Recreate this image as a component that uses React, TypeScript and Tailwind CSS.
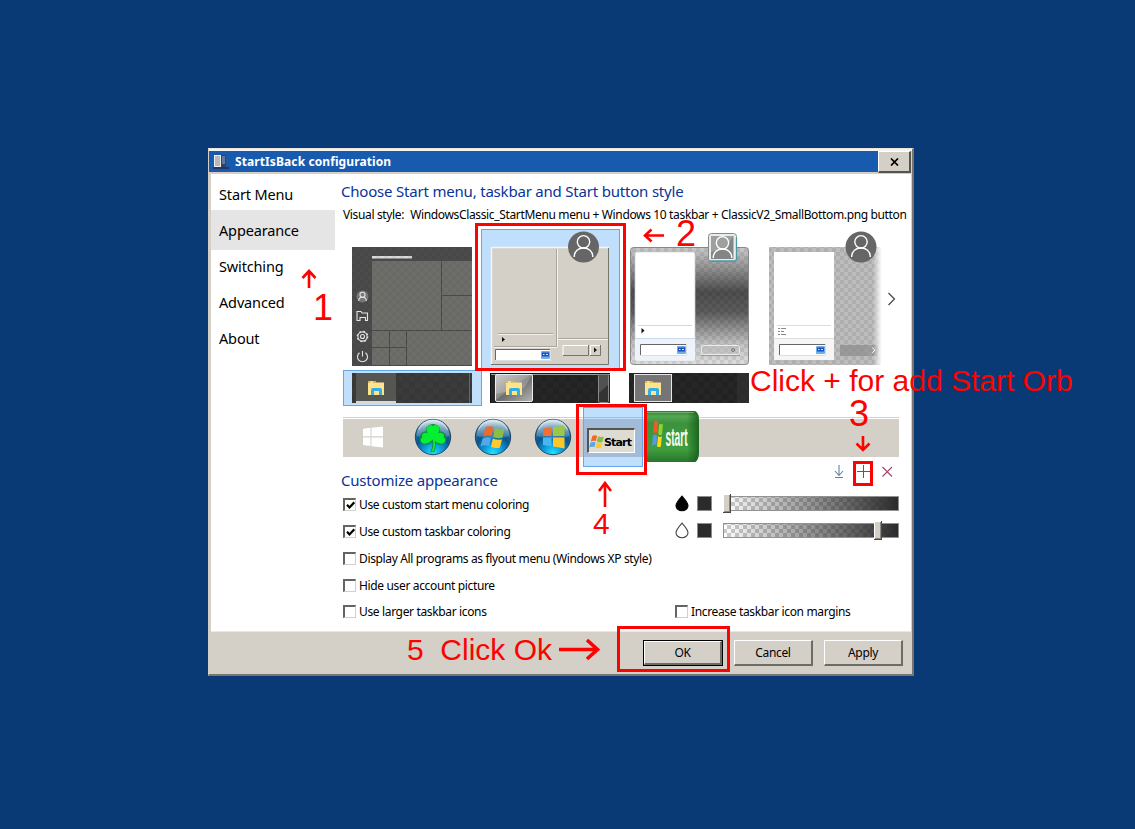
import React from "react";

const red = "#fb0300";

function Defs() {
  return (
    <svg width="0" height="0" className="absolute" aria-hidden="true">
      <defs>
        <pattern id="chk" width="8" height="8" patternUnits="userSpaceOnUse">
          <rect width="4" height="4" fill="#000" opacity=".08" />
          <rect x="4" y="4" width="4" height="4" fill="#000" opacity=".08" />
        </pattern>
        <pattern id="chkLight" width="12" height="12" patternUnits="userSpaceOnUse">
          <rect width="6" height="6" fill="#fff" opacity=".02" />
          <rect x="6" y="6" width="6" height="6" fill="#fff" opacity=".02" />
        </pattern>
        <linearGradient id="aero" x1="0" y1="0" x2="0" y2="1">
          <stop offset="0" stopColor="#c9c9c9" />
          <stop offset=".12" stopColor="#a5a5a5" />
          <stop offset=".38" stopColor="#4e4e4e" />
          <stop offset=".55" stopColor="#5c5c5c" />
          <stop offset=".82" stopColor="#c0c0c0" />
          <stop offset="1" stopColor="#dedede" />
        </linearGradient>
        <linearGradient id="fade" x1="0" y1="0" x2="1" y2="0">
          <stop offset="0" stopColor="#fff" stopOpacity="0" />
          <stop offset=".8" stopColor="#fff" />
        </linearGradient>
        <linearGradient id="gloss" x1="0" y1="0" x2="1" y2="1">
          <stop offset="0" stopColor="#c4c4c4" />
          <stop offset=".45" stopColor="#8a8a8a" />
          <stop offset=".5" stopColor="#6c6c6c" />
          <stop offset="1" stopColor="#b5b5b5" />
        </linearGradient>
        <radialGradient id="orb" cx=".5" cy=".95" r=".95">
          <stop offset="0" stopColor="#25e0ff" />
          <stop offset=".28" stopColor="#0b9bdc" />
          <stop offset=".55" stopColor="#07568f" />
          <stop offset=".8" stopColor="#2c6d9c" />
          <stop offset="1" stopColor="#a9cbdd" />
        </radialGradient>
        <linearGradient id="shine" x1="0" y1="0" x2="0" y2="1">
          <stop offset="0" stopColor="#fff" stopOpacity=".65" />
          <stop offset="1" stopColor="#fff" stopOpacity=".12" />
        </linearGradient>
        <linearGradient id="xp" x1="0" y1="0" x2="0" y2="1">
          <stop offset="0" stopColor="#2f7a2f" />
          <stop offset=".1" stopColor="#55a754" />
          <stop offset=".25" stopColor="#3b923b" />
          <stop offset=".75" stopColor="#3f9f3f" />
          <stop offset="1" stopColor="#2a742b" />
        </linearGradient>
        <linearGradient id="xpEdge" x1="0" y1="0" x2="1" y2="0">
          <stop offset="0" stopColor="#175c1b" stopOpacity="0" />
          <stop offset="1" stopColor="#175c1b" stopOpacity=".85" />
        </linearGradient>
        <linearGradient id="slide" x1="0" y1="0" x2="1" y2="0">
          <stop offset="0" stopColor="#2b2b2b" stopOpacity="0" />
          <stop offset="1" stopColor="#2b2b2b" />
        </linearGradient>
        <pattern id="sliderChk" width="8" height="8" patternUnits="userSpaceOnUse">
          <rect width="8" height="8" fill="#fff" />
          <rect width="4" height="4" fill="#ccc" />
          <rect x="4" y="4" width="4" height="4" fill="#ccc" />
        </pattern>
      </defs>
    </svg>
  );
}

function Person({ cx, cy }: { cx: number; cy: number }) {
  return (
    <g transform={`translate(${cx} ${cy})`} fill="none" stroke="#fff" strokeWidth="1.4">
      <circle cx="0" cy="-4.700" r="6.200" />
      <path d="M-9.300 10.500C-9.300 4.500-5 1.500 0 1.500s9.300 3 9.300 9" />
    </g>
  );
}

function SearchBox({ x, y, w }: { x: number; y: number; w: number }) {
  return (
    <g>
      <rect x={x} y={y} width={w} height="12" fill="#fff" />
      <path d={`M${x + 0.5} ${y + 12}V${y + 0.5}H${x + w}`} fill="none" stroke="#666" />
      <path d={`M${x} ${y + 11.5}H${x + w - 0.5}V${y}`} fill="none" stroke="#ddd" />
      <rect x={x + w - 10} y={y + 2} width="9" height="8" rx="1" fill="#6fb0ea" />
      <rect x={x + w - 9} y={y + 3.5} width="7" height="4" fill="#1b4fc0" />
      <path d={`M${x + w - 8} ${y + 5.5}h1.500M${x + w - 5} ${y + 5.500}h2`} stroke="#d8e8ff" />
    </g>
  );
}

function ModernMenu() {
  return (
    <svg width="139" height="146" viewBox="343 224 139 146" className="shrink-0">
      <rect x="352" y="247" width="120" height="119" fill="#4b4b4b" />
      <rect x="372" y="256" width="40" height="2.500" fill="#d9d9d9" />
      <g fill="#6d6e69">
        <rect x="372" y="261" width="69" height="69" />
        <rect x="442" y="261" width="30" height="34" />
        <rect x="442" y="296" width="30" height="34" />
        <rect x="372" y="331" width="17" height="16" />
        <rect x="390" y="331" width="16" height="16" />
        <rect x="372" y="348" width="17" height="17" />
        <rect x="390" y="348" width="16" height="17" />
        <rect x="407" y="331" width="65" height="34" />
      </g>
      <rect x="352" y="247" width="120" height="119" fill="url(#chk)" opacity=".5" />
      <circle cx="362.500" cy="296.500" r="6" fill="#777" />
      <g fill="none" stroke="#e4e4e4" strokeWidth="1.100">
        <circle cx="362.500" cy="294.700" r="2.500" />
        <path d="M358.700 301c0-5 7.600-5 7.600 0" />
        <path d="M359.500 320.500h-2.500v-9h4l1 1.500h5.500v7.500h-2v-3h-5.500v3z" />
        <circle cx="362.500" cy="336.500" r="2" />
        <circle cx="362.500" cy="336.500" r="4.600" />
        <circle cx="362.500" cy="336.500" r="5.300" strokeDasharray="2 2.160" />
        <path d="M359.500 352.800a5 5 0 1 0 6 0M362.500 351v5.500" />
      </g>
    </svg>
  );
}

function ClassicMenu() {
  return (
    <svg width="139" height="146" viewBox="482 224 139 146" className="shrink-0 overflow-visible">
      <rect x="481.500" y="229.500" width="138" height="140" fill="#bfdffd" stroke="#66a7e8" />
      <rect x="491" y="247" width="118" height="118" fill="#d4d0c8" />
      <path d="M491.500 365V247.500H609" fill="none" stroke="#f6f4f0" strokeWidth="1.500" />
      <path d="M491 364.500H608.500V248" fill="none" stroke="#777469" />
      <path d="M556.500 249v98M498 333.500h55M494 346.500h63M558 338.500h50" stroke="#aaa69d" />
      <path d="M557.500 249v98M498 334.500h55M494 347.500h63M558 339.500h50" stroke="#f5f3ee" />
      <path d="M502 337l3 2.500-3 2.500z" fill="#111" />
      <SearchBox x={495} y={349} w={56} />
      <path d="M563 355.500V345.500H589M590.500 355V345.500H600" fill="none" stroke="#fff" />
      <path d="M563 355.500H588.500V345M590 355.500H600.500V345" fill="none" stroke="#77746b" />
      <path d="M594 347.500l3 2.500-3 2.500z" fill="#111" />
      <circle cx="583.500" cy="247" r="15.500" fill="#666" />
      <Person cx={583.5} cy={246.5} />
    </svg>
  );
}

function AeroMenu() {
  return (
    <svg width="139" height="146" viewBox="621 224 139 146" className="shrink-0">
      <rect x="630.500" y="247.500" width="118" height="117" rx="3" fill="url(#aero)" stroke="#888" />
      <rect x="631" y="248" width="117" height="116" fill="url(#chk)" />
      <rect x="635" y="252" width="60" height="109" rx="2" fill="#fff" stroke="#c9cdd2" strokeWidth=".7" />
      <rect x="635" y="338" width="60" height="22" fill="#eef3fb" />
      <path d="M635 338.500h60M638 325.500h54" stroke="#ccd9e8" />
      <path d="M641.500 328l3 2.500-3 3z" fill="#111" />
      <SearchBox x={640} y={344} w={47} />
      <rect x="701.500" y="345.500" width="38" height="9" rx="2" fill="#bbb" fillOpacity=".5" stroke="#eee" />
      <path d="M701 355.500h39" stroke="#999" />
      <circle cx="733" cy="350" r="1.500" fill="none" stroke="#777" />
      <rect x="708.500" y="233.500" width="28" height="28" rx="3" fill="#e5edf0" stroke="#888" />
      <path d="M710 261h24.500q2 0 2-2V238" fill="none" stroke="#4f98a8" strokeWidth="1.300" />
      <rect x="711" y="236" width="22.500" height="23" fill="#858585" />
      <path d="M711 236h22.500l-7 11-15.500 5z" fill="#aaa" opacity=".7" />
      <Person cx={722.5} cy={247.5} />
    </svg>
  );
}

function PlainMenu() {
  return (
    <svg width="124" height="146" viewBox="760 224 124 146" className="shrink-0">
      <rect x="769" y="247" width="115" height="118" fill="#bdbdbd" />
      <rect x="769" y="247" width="115" height="118" fill="url(#chk)" />
      <rect x="774" y="252" width="60" height="108" fill="#fff" />
      <rect x="774" y="339" width="60" height="21" fill="#f6f6f6" />
      <path d="M774 338.500h60M777 325.500h54" stroke="#ddd" />
      <path d="M778 328.500h2m1 0h5M778 331.500h2m1 0h3M778 334.500h2m1 0h5" stroke="#888" />
      <SearchBox x={779} y={344} w={47} />
      <path d="M840 345h25v11h-25z" fill="#8d8d8d" opacity=".75" />
      <path d="M865 345h13v11h-13z" fill="#888" opacity=".6" />
      <path d="M872 347.500l3 2.500-3 3" stroke="#eee" fill="none" />
      <rect x="873" y="245" width="11" height="122" fill="url(#fade)" />
      <circle cx="861" cy="247" r="15.500" fill="#666" />
      <Person cx={861} cy={246.5} />
    </svg>
  );
}

function TaskbarPreview({ kind }: { kind: "modern" | "glossy" | "plain" }) {
  return (
    <svg width="139" height="36" viewBox="0 0 139 36" className="shrink-0">
      {kind === "modern" && <rect x=".5" y=".5" width="138" height="35" fill="#bfdffd" stroke="#66a7e8" />}
      <g transform={`translate(${kind === "modern" ? 0 : -1} 0)`}>
        <rect x="9" y="3" width="120" height="30" fill={kind === "modern" ? "#373737" : "#222"} />
        <rect x="9" y="3" width="120" height="30" fill="url(#chkLight)" />
        {kind === "modern" && (
          <g>
            <rect x="13" y="3" width="40" height="30" fill="#555651" />
            <rect x="13" y="31" width="40" height="2" fill="#d8d8d8" />
            <path d="M126.500 3v30" stroke="#666" />
          </g>
        )}
        {kind === "glossy" && (
          <g>
            <path d="M9 4.500h120" stroke="#9c9c9c" />
            <path d="M9 3.500h120M9.500 4v29" stroke="#111" />
            <rect x="14.500" y="4.500" width="37" height="27" rx="1.500" fill="url(#gloss)" stroke="#eee" />
            <path d="M15 5h36l-8 13-28 6z" fill="#ddd" opacity=".3" />
            <rect x="117.500" y="4.500" width="10" height="28" rx="1" fill="#333" stroke="#888" />
            <path d="M118 5h9v10l-9 8z" fill="#666" opacity=".6" />
          </g>
        )}
        {kind === "plain" && (
          <g>
            <rect x="14.500" y="4.500" width="37" height="27" fill="#757575" stroke="#e8e8e8" />
            <rect x="117" y="3" width="12" height="30" fill="#333" opacity=".6" />
          </g>
        )}
        <path d="M25 11h7l1.500 1.500H41V25H25z" fill="#ffe38c" />
        <path d="M25 11h7l1 2h-8z" fill="#ecb62e" />
        <path d="M27 12h3" stroke="#fff" />
        <path d="M28 25v-5q0-2 2-2h7q2 0 2 2v5h-3v-4h-5v4z" fill="#33ade5" />
      </g>
    </svg>
  );
}

function Flag({ wave = false }: { wave?: boolean }) {
  return wave ? (
    <g>
      <path d="M22.500 20.500q3.500-2 8-.5L28.500 29q-4.500-1.300-8.500.8z" fill="#ee6a2c" />
      <path d="M32 21q4.500 2 9.500.5L39.500 30.500q-4.500 1.500-9.300-.5z" fill="#8bbf43" />
      <path d="M19.500 31.500q4.500-2 8.500-.5l-2 8q-4-1.700-8.500.5z" fill="#52a8e8" />
      <path d="M29.800 31.500q4.500 2.200 9.200.8l-2 8.200q-4.500 1.500-9-.8z" fill="#ffc92e" />
    </g>
  ) : (
    <g>
      <path d="M20 21.500l8.500-1.200V29H20z" fill="#ee7032" />
      <path d="M30 20l11.500-1.500V29H30z" fill="#9cc944" />
      <path d="M20 30.500h8.500v8.700L20 38z" fill="#49b6ef" />
      <path d="M30 30.500h11.500v11L30 39.500z" fill="#fdc72b" />
    </g>
  );
}

function Orb({ children }: { children: React.ReactNode }) {
  return (
    <svg width="60" height="60" viewBox="0 0 60 60" className="shrink-0">
      <circle cx="30" cy="30" r="17.700" fill="url(#orb)" stroke="#17425f" strokeWidth=".9" />
      <path d="M13.500 29a16.500 16.500 0 0 1 33 0q-16 5-33 0z" fill="url(#shine)" />
      {children}
      <path d="M15.500 23a16 16 0 0 1 29 0" fill="none" stroke="#e1eff5" strokeWidth=".8" opacity=".8" />
    </svg>
  );
}

function OrbStrip() {
  return (
    <div className="mr-[12px] ml-[8px] flex h-[60px] shrink-0 bg-[linear-gradient(to_bottom,#fff_10px,#ccd5cb_10px,#ccd5cb_11px,#fff_11px,#fff_12px,#d4d0c8_12px,#d4d0c8_50px,#fff_50px)]">
      <svg width="60" height="60" viewBox="0 0 60 60" className="shrink-0">
        <path d="M20 21.800l7.500-1V29.300H20zM28.500 20.700L40 19.500v9.800H28.500zM20 30.500h7.500V39L20 38zM28.500 30.500H40V40.500l-11.500-1.300z" fill="#fff" />
      </svg>
      <Orb>
        <g fill="#128b41" stroke="#128b41" strokeWidth="1.600">
          <path d="M29.300 31c1.500 5 1.500 9-1 13.500l2.200 0c2-4 2-8 .8-13z" />
          <ellipse cx="30" cy="22.800" rx="6.500" ry="5" />
          <circle cx="23.300" cy="31" r="6" />
          <circle cx="36.700" cy="31" r="6" />
        </g>
        <g fill="#06ee32">
          <path d="M29.300 31c1.500 5 1.500 9-1 13.500l2.200 0c2-4 2-8 .8-13z" />
          <path d="M30 32C25 28 21 22 25 18.800c2-1.300 4-.8 5 .5 1-1.300 3-1.800 5-.5 4 3.200 0 9.200-5 13.200z" />
          <path d="M30.500 30.500C27 26.500 22.500 24.500 20 26.500c-1.300 1-1.200 2.800-.5 4-1.800.6-2.500 2.600-1.500 4.300 2.200 3.500 8.500 2 12.500-3z" />
          <path d="M29.500 30.500C33 26.500 37.500 24.500 40 26.500c1.300 1 1.200 2.800.5 4 1.800.6 2.500 2.600 1.500 4.300-2.200 3.500-8.500 2-12.500-3z" />
        </g>
      </Orb>
      <Orb><Flag wave /></Orb>
      <Orb><Flag /></Orb>
      <div className="flex h-[60px] w-[60px] shrink-0 items-center justify-center border border-[#66a7e8] bg-[linear-gradient(to_bottom,#bfdffd_9px,#a3bfd6_9px,#a3bfd6_10px,#bfdffd_10px,#bfdffd_11px,#a1bbd8_11px,#a1bbd8_49px,#bfdffd_49px)] pt-[7px] pr-[4px]">
        <div className="flex h-[25px] w-[48px] shrink-0 items-center border-t-2 border-r border-b border-l-2 border-t-[#55544f] border-r-white border-b-white border-l-[#55544f] bg-[#dedbd3] pt-[2px]">
          <svg width="15" height="16" viewBox="17 18 25 25" className="shrink-0"><Flag wave /></svg>
          <span className="font-['DejaVu_Sans'] text-[11px] leading-none font-bold tracking-[-0.85px] text-black">Start</span>
        </div>
      </div>
      <svg width="60" height="60" viewBox="0 0 60 60" className="shrink-0">
        <path d="M3 4h49q4 2 4 10v30q0 9-4 11H3z" fill="url(#xp)" />
        <path d="M44 4h8q4 2 4 10v30q0 9-4 11h-8z" fill="url(#xpEdge)" />
        <path d="M4 5.500h47" stroke="#91cf8e" opacity=".6" />
        <g transform="translate(10 14) scale(.95 1.200)">
          <path d="M1 1q2-2 4.500-.3L4.500 10Q2.500 9 0 10.500z" fill="#ef5b25" />
          <path d="M6.500 2q2 1.500 4 0l-1 9q-2 1.500-4 0z" fill="#92d230" />
          <path d="M0 12q2-1.500 4.300 0L3.500 20Q1.500 19-1 21z" fill="#5a96ec" />
          <path d="M5.300 12.500q2 1.500 4 0l-1 8.500q-2 1.500-4 0z" fill="#ffdc12" />
        </g>
        <text transform="translate(22.500 39) scale(.41 1)" fontFamily="Liberation Sans" fontSize="25" fontWeight="bold" letterSpacing="0" fill="#f4fff0">start</text>
      </svg>
    </div>
  );
}

function Check({ label, checked = false }: { label: string; checked?: boolean }) {
  return (
    <label className="flex items-center gap-[3px] whitespace-nowrap">
      <span className="flex h-[13px] w-[13px] items-center justify-center border-t-2 border-r border-b border-l-2 border-t-[#66645f] border-r-[#d4d0c8] border-b-[#d4d0c8] border-l-[#66645f] bg-white">
        {checked && (
          <svg width="9" height="9" viewBox="0 0 9 9"><path d="M1 3.800l2.500 2.700L8.300 1.300" fill="none" stroke="#000" strokeWidth="2.200" /></svg>
        )}
      </span>
      <span>{label}</span>
    </label>
  );
}

function ColorSlider({ filled = false, value }: { filled?: boolean; value: number }) {
  return (
    <div className="-mt-[2px] flex items-center">
      <svg width="14" height="17" viewBox="0 0 14 17"><path d="M7 1.200Q1 8 1 10.800a6 4.900 0 0 0 12 0Q13 8 7 1.200z" fill={filled ? "#000" : "#fff"} stroke={filled ? "#000" : "#444"} strokeWidth="1.100" /></svg>
      <span className="ml-[8px] h-[15px] w-[15px] border border-[#8c8c8c] bg-[#2b2b2b]" />
      <svg width="177" height="20" viewBox="0 0 177 20" className="ml-[11px]">
        <rect x=".5" y="2.500" width="175" height="14" fill="url(#sliderChk)" />
        <rect x=".5" y="2.500" width="175" height="14" fill="url(#slide)" stroke="#929292" />
        <g transform={`translate(${value} 0)`}>
          <rect width="8" height="19" fill="#4a4945" />
          <rect width="7" height="18" fill="#fff" />
          <rect x="1" y="1" width="6" height="17" fill="#8b8981" />
          <rect x="1" y="1" width="5" height="16" fill="#d4d0c8" />
        </g>
      </svg>
    </div>
  );
}

function DialogButton({ label, primary = false }: { label: string; primary?: boolean }) {
  return (
    <div className={primary ? "h-[26px] w-[80px] border border-black" : "h-[26px] w-[79px]"}>
      <button className="flex h-full w-full items-center justify-center border-t border-r-2 border-b-2 border-l border-t-white border-r-[#6d6b66] border-b-[#6d6b66] border-l-white bg-[#d4d0c8]">{label}</button>
    </div>
  );
}

function Arrow({ className, d, w, h, weight = 2.6 }: { className: string; d: string; w: number; h: number; weight?: number }) {
  return (
    <svg width={w} height={h} viewBox={`0 0 ${w} ${h}`} className={className}>
      <path d={d} fill="none" stroke={red} strokeWidth={weight} />
    </svg>
  );
}

function Annotations() {
  return (
    <div className="pointer-events-none absolute inset-0 font-['Liberation_Sans'] text-[30px] leading-[30px] tracking-normal whitespace-pre text-[#fb0300]">
      <div className="absolute top-[223px] left-[475px] h-[148px] w-[151px] border-3 border-[#fb0300]" />
      <div className="absolute top-[404px] left-[576px] h-[71px] w-[71px] border-3 border-[#fb0300]" />
      <div className="absolute top-[461px] left-[853px] h-[25px] w-[20px] border-3 border-[#fb0300]" />
      <div className="absolute top-[626px] left-[617px] h-[46px] w-[113px] border-3 border-[#fb0300]" />
      <span className="absolute top-[290px] left-[313px] text-[36px] leading-[36px]">1</span>
      <span className="absolute top-[216px] left-[676px] text-[36px] leading-[36px]">2</span>
      <span className="absolute top-[396px] left-[849px] text-[36px] leading-[36px]">3</span>
      <span className="absolute top-[509px] left-[593px]">4</span>
      <span className="absolute top-[366px] left-[750px]">Click + for add Start Orb</span>
      <span className="absolute top-[635px] left-[407px]">5  Click Ok</span>
      <Arrow className="absolute top-[269px] left-[301px]" w={16} h={20} d="M8 19V2M1.500 9L8 2l6.500 7" />
      <Arrow className="absolute top-[227px] left-[643px]" w={22} h={17} d="M21 8.500H2M8.500 2.500L2 8.500l6.500 6" />
      <Arrow className="absolute top-[435px] left-[855px]" w={16} h={18} d="M8 1v14M1.500 8.500L8 15l6.500-6.500" />
      <Arrow className="absolute top-[481px] left-[598px]" w={14} h={27} d="M7 26V2M1 10l6-8 6 8" />
      <Arrow className="absolute top-[638px] left-[559px]" w={42} h={23} weight={3.6} d="M0 11.500h38M28 2l10.500 9.500L28 21" />
    </div>
  );
}

const navItems = ["Start Menu", "Appearance", "Switching", "Advanced", "About"];

export default function App() {
  return (
    <div className="relative h-[829px] w-[1135px] overflow-hidden bg-[#0a3a76] pt-[148px] pl-[208px] font-['Noto_Sans',sans-serif] text-[12px] leading-[14px] tracking-[-0.35px] text-black">
      <Defs />
      <div className="flex h-[528px] w-[706px] flex-col border-t border-r-2 border-b-2 border-l border-t-[#e8e5de] border-r-[#77756f] border-b-[#77756f] border-l-[#d4d0c8] bg-[#d4d0c8]">
        <div className="h-[2px] shrink-0 bg-[#f5f3ef]" />
        <header className="mr-px flex h-[21px] shrink-0 items-center bg-[#185aae] pl-[4px] text-white">
          <svg width="17" height="16" viewBox="0 0 17 16">
            <path d="M1 1h7v12H1z" fill="#eee" />
            <path d="M2 3h5M2 5h5M2 7h5M2 9h5M2 11h5" stroke="#777" strokeWidth=".9" />
            <path d="M8 1h5v12H8z" fill="#334266" />
            <path d="M9 3h3M9 5h3M9 7h3M9 9h3" stroke="#aab8d0" strokeWidth=".9" />
            <path d="M0 13h16v2H0z" fill="#26365c" />
          </svg>
          <span className="ml-[5px] text-[12px] font-bold tracking-[0.1px]">StartIsBack configuration</span>
          <button className="ml-auto flex h-[22px] w-[33px] shrink-0 items-center justify-center self-start border-t border-r-2 border-b-2 border-l border-t-white border-r-[#55534f] border-b-[#55534f] border-l-white bg-[#d4d0c8]">
            <svg width="9" height="8" viewBox="0 0 9 8"><path d="M1 .5l7 7M8 .5l-7 7" stroke="#000" strokeWidth="1.700" /></svg>
          </button>
        </header>
        <div className="mt-[2px] mr-px ml-[2px] flex h-[457px] shrink-0 bg-white">
          <nav className="flex w-[124px] shrink-0 flex-col text-[14.5px] tracking-[-0.15px]">
            {navItems.map((item) => (
              <div key={item} className={item === "Appearance" ? "-mb-[4px] flex h-[40px] items-center bg-[#e5e5e5] pl-[8px]" : "flex h-[36px] items-center pt-[4px] pl-[8px]"}>{item}</div>
            ))}
          </nav>
          <main className="flex min-w-0 flex-1 flex-col">
            <h1 className="flex h-[34px] shrink-0 items-center pl-[6px] text-[15px] tracking-[-0.2px] whitespace-nowrap text-[#0a3399]">Choose Start menu, taskbar and Start button style</h1>
            <p className="flex h-[16px] shrink-0 items-center gap-[6px] pb-[2px] pl-[8px] whitespace-nowrap">
              <span>Visual style:</span>
              <span>WindowsClassic_StartMenu menu + Windows 10 taskbar + ClassicV2_SmallBottom.png button</span>
            </p>
            <div className="flex h-[146px] shrink-0 items-center pl-[8px]">
              <ModernMenu />
              <ClassicMenu />
              <AeroMenu />
              <PlainMenu />
              <svg width="9" height="14" viewBox="0 0 9 14" className="mt-[4px] ml-[3px]"><path d="M1.500 1l6 6-6 6" fill="none" stroke="#444" strokeWidth="1.200" /></svg>
            </div>
            <div className="flex h-[36px] shrink-0 pl-[8px]">
              <TaskbarPreview kind="modern" />
              <TaskbarPreview kind="glossy" />
              <TaskbarPreview kind="plain" />
            </div>
            <div className="h-px shrink-0" />
            <OrbStrip />
            <div className="flex h-[24px] shrink-0 items-start justify-between pr-[18px] pl-[6px]">
              <h2 className="pt-[6px] text-[15px] tracking-[-0.2px] text-[#0a3399]">Customize appearance</h2>
              <svg width="60" height="14" viewBox="0 0 60 14" fill="none" className="-mt-[2px]">
                <path d="M6 0v10M2 6l4 4.500L10 6M2 12.500h8" stroke="#5f83a8" strokeWidth="1.100" />
                <path d="M30.500 0v13M24 6.500h13" stroke="#158a1b" />
                <path d="M49.500 2l9.500 9.500M59 2l-9.500 9.500" stroke="#a84370" strokeWidth="1.100" />
              </svg>
            </div>
            <div className="grid shrink-0 grid-cols-[332px_1fr] grid-rows-[27px_27px_27px_27px_25px] items-center pl-[8px]">
              <Check label="Use custom start menu coloring" checked />
              <ColorSlider filled value={0} />
              <Check label="Use custom taskbar coloring" checked />
              <ColorSlider value={151} />
              <Check label="Display All programs as flyout menu (Windows XP style)" />
              <span />
              <Check label="Hide user account picture" />
              <span />
              <Check label="Use larger taskbar icons" />
              <Check label="Increase taskbar icon margins" />
            </div>
          </main>
        </div>
        <div className="mr-px ml-[2px] h-px shrink-0 bg-[#eae8e3]" />
        <footer className="flex flex-1 items-start justify-end gap-[11px] pt-[8px] pr-[9px]">
          <DialogButton label="OK" primary />
          <DialogButton label="Cancel" />
          <DialogButton label="Apply" />
        </footer>
      </div>
      <Annotations />
    </div>
  );
}
